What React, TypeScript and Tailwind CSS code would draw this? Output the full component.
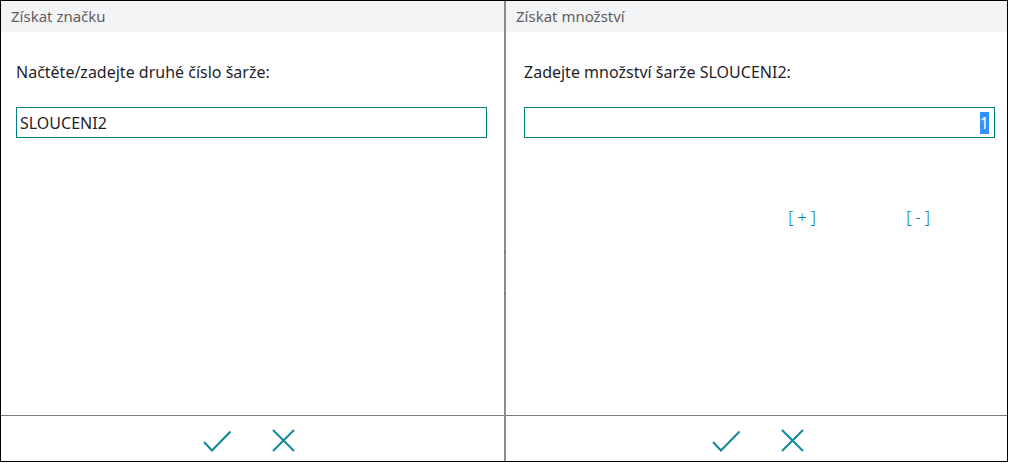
const font = { fontFamily: '"Noto Sans", "Open Sans", sans-serif' }

function CheckIcon() {
  return (
    <svg width="28" height="22" viewBox="0 0 28 22" fill="none">
      <polyline points="1,12 9,20.5 27.5,1.5" stroke="#13879a" strokeWidth="2" />
    </svg>
  )
}

function CloseIcon() {
  return (
    <svg width="23" height="23" viewBox="0 0 23 23" fill="none">
      <path d="M1 1 L22 22 M22 1 L1 22" stroke="#13879a" strokeWidth="2" />
    </svg>
  )
}

function Footer({ shift }: { shift: string }) {
  return (
    <div className={`h-[46px] border-t border-[#7a7a7a] flex items-center justify-center gap-[41px] pt-[4px] ${shift}`}>
      <CheckIcon />
      <CloseIcon />
    </div>
  )
}

function Header({ title }: { title: string }) {
  return (
    <div className="h-[31px] bg-[#f3f4f6] px-[10px] flex items-center text-[15px] text-[#605e5c]">
      {title}
    </div>
  )
}

export default function App() {
  return (
    <div className="w-[1008px] h-[462px] border border-black flex bg-white" style={font}>
      <div className="w-[503px] flex flex-col">
        <Header title="Získat značku" />
        <div className="flex-1 pl-[15px] pr-[17px] pt-[25px]">
          <div className="text-[16px] text-[#1f1f2a] h-[30px] leading-[30px]">Načtěte/zadejte druhé číslo šarže:</div>
          <div className="mt-[20px] h-[31px] border border-[#00807f] px-[3px] flex items-center text-[16px] text-[#1f1f2a]">
            SLOUCENI2
          </div>
        </div>
        <Footer shift="pr-[8px]" />
      </div>

      <div className="w-[2px] bg-[#8c8c8c] flex flex-col">
        <div className="h-[251px]" />
        <div className="h-[1px] bg-[#1e8a8a]" />
        <div className="h-[40px]" />
        <div className="h-[1px] bg-[#1e8a8a]" />
      </div>

      <div className="flex-1 flex flex-col">
        <Header title="Získat množství" />
        <div className="flex-1 pl-[18px] pr-[12px] pt-[25px]">
          <div className="text-[16px] text-[#1f1f2a] h-[30px] leading-[30px]">Zadejte množství šarže SLOUCENI2:</div>
          <div className="mt-[20px] h-[31px] border border-[#00807f] px-[5px] flex items-center justify-end text-[16px] text-[#1f1f2a]">
            <span className="bg-[#3390ff] text-white leading-[22px]">1</span>
          </div>
          <div className="mt-[67px] flex justify-end pr-[19px] text-[16px] font-light text-[#00818f]">
            <div className="w-[116px] text-center">[ + ]</div>
            <div className="w-[116px] text-center">[ - ]</div>
          </div>
        </div>
        <Footer shift="pl-[2px]" />
      </div>
    </div>
  )
}
